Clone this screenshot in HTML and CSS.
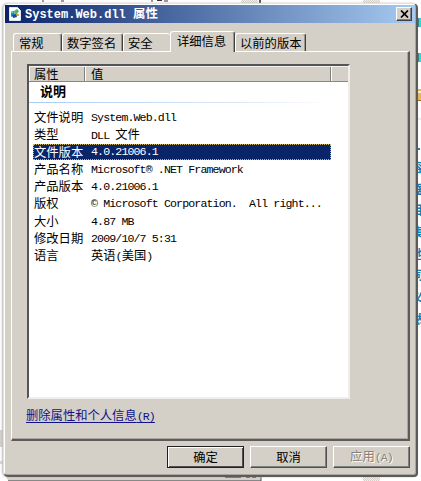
FILE: index.html
```html
<!DOCTYPE html>
<html lang="zh-CN">
<head>
<meta charset="utf-8">
<title>System.Web.dll 属性</title>
<link rel="stylesheet" href="styles.css">
</head>
<body>
<div class="desktop">
  <svg class="behind" width="421" height="481" viewBox="0 0 421 481" aria-hidden="true">
    <defs><pattern id="dots" width="2" height="2" patternUnits="userSpaceOnUse"><rect width="2" height="2" fill="#f2f1ee"/><path d="M0 0h1v1H0zM1 1h1v1H1z" fill="#d4d0c8"/></pattern></defs>
    <path d="M241 0h17v3h-17zM363 0h17v3h-17zM363 476h17v5h-17z" fill="url(#dots)"/>
    <path d="M260 0v3" stroke="#555" stroke-width="2"/>
    <path d="M42 1h2M61 1h3M151 1h2M157 .5h5M164 1h4" stroke="#333"/>
    <path d="M0 430h6v17H0z" fill="#d4d0c8"/>
    <path d="M0 461h5v3H0z" fill="#d8d5cf"/>
    <path d="M4 474h257v6H8z" fill="#d4d0c8"/>
    <path d="M8 480.500h253" stroke="#888"/>
    <path d="M261 476v5" stroke="#555"/>
    <path d="M225 477h16M246 477h4M252 477h4" stroke="#444" stroke-width="1.500"/>
    <path d="M417 18h4v9h-4zM417 53h4v9h-4z" fill="#13e4ea"/>
    <path d="M418 18h1v9h-1zM418 53h1v9h-1z" fill="#407b70"/>
    <path d="M417 89h4v12h-4z" fill="#e9b84f"/><path d="M417 91h4v2h-4z" fill="#fff0c0"/>
    <path d="M417 100.500h4" stroke="#9b7022"/>
    <path d="M417 119h4" stroke="#ddd"/>
    <path d="M418 149h2" stroke="#087fc0" stroke-width="2"/>
  </svg>
  <div class="sidetext" aria-hidden="true"><span>容</span><span>器</span><span>目</span><span>集</span><span>他</span><span>同</span><span>义</span><span>然</span></div>

  <main class="window">
    <header class="titlebar">
      <svg class="appicon" width="12" height="14" viewBox="0 0 12 14"><path d="M.5.500h8l3 3v10H.5z" fill="#fff" stroke="#dfe8ef"/><path d="M2 5l3-1 1 4-4 2z" fill="#1593c5"/><path d="M5 4l3-2 2 2-2 3-2 0z" fill="#45b66c"/><path d="M7 7h3v2H7z" fill="#dfa83a"/><path d="M3 8l4-1 1 3-4 1z" fill="#164b91"/><path d="M2 4h2v2H2z" fill="#5cc5e8"/></svg>
      <h1><span class="tl">System.Web.dll </span>属性</h1>
      <button class="close" aria-label="关闭"><svg width="9" height="8" viewBox="0 0 9 8"><path d="M1 .500l7 7M8 .500l-7 7" stroke="#000" stroke-width="1.700"/></svg></button>
    </header>

    <nav class="tabs">
      <div class="tab t1">常规</div><div class="tab t2">数字签名</div><div class="tab t3">安全</div><div class="tab active">详细信息</div><div class="tab t5">以前的版本</div>
    </nav>

    <section class="panel">
      <div class="list">
        <div class="head"><div class="h1">属性</div><div class="h2">值</div><div class="h3"></div></div>
        <div class="group">说明</div>
        <div class="rows">
          <div class="row"><span>文件说明</span><span class="l">System.Web.dll</span></div>
          <div class="row"><span>类型</span><span><span class="l">DLL </span>文件</span></div>
          <div class="row selected"><span>文件版本</span><span class="l">4.0.21006.1</span></div>
          <div class="row"><span>产品名称</span><span class="l">Microsoft® .NET Framework</span></div>
          <div class="row"><span>产品版本</span><span class="l">4.0.21006.1</span></div>
          <div class="row"><span>版权</span><span class="l">© Microsoft Corporation.  All right...</span></div>
          <div class="row"><span>大小</span><span class="l">4.87 MB</span></div>
          <div class="row"><span>修改日期</span><span class="l">2009/10/7 5:31</span></div>
          <div class="row"><span>语言</span><span>英语<span class="l">(</span>美国<span class="l">)</span></span></div>
        </div>
      </div>
      <a class="remove">删除属性和个人信息<span class="l">(R)</span></a>
    </section>

    <footer class="buttons">
      <button class="btn default">确定</button><button class="btn">取消</button><button class="btn disabled">应用<span class="l">(A)</span></button>
    </footer>
  </main>
</div>
</body>
</html>
```

FILE: styles.css
```css
* { box-sizing: border-box; }
body { margin: 0; background: #fff; color: #000; font: 12.3px/17.3px "Noto Sans CJK SC", sans-serif; }
button { font: inherit; padding: 0; margin: 0; }
.desktop { position: relative; width: 421px; height: 481px; overflow: hidden; padding: 3px 0 0 3px; }
.behind { position: absolute; left: 0; top: 0; }
.sidetext { position: absolute; left: 411px; top: 157px; display: flex; flex-direction: column; color: #087fc0; font-weight: 700; }
.sidetext span { height: 21.7px; line-height: 21.7px; }
.l { font-family: "Liberation Mono", monospace; font-size: 11.6px; letter-spacing: -0.88px; white-space: pre; }

.window {
  position: relative; width: 415px; height: 474px; padding: 1px 2px 2px;
  background: #d4d0c8; border-radius: 5px 5px 4px 5px;
  border: 1px solid #e5e2dc; border-right: 2px solid #5c5b59; border-bottom: 2px solid #5c5b59;
  box-shadow: inset 1px 1px #fff, inset -1px -1px #aaa69f, -1px 0 2px #bbb;
  display: flex; flex-direction: column;
}
.titlebar { margin-left: -1px; width: 410px; height: 18px; flex: none; display: flex; align-items: center; background: linear-gradient(90deg, #0a246a, #a6caf0); padding: 0 3px 0 4px; color: #fff; }
.appicon { flex: none; }
h1 { flex: 1; margin: 0 0 0 4px; font-size: 12.4px; line-height: 18px; font-weight: 700; white-space: pre; }
.tl { font-family: "Liberation Mono", monospace; font-size: 12px; letter-spacing: 0; }
.close { width: 16px; height: 14px; display: flex; align-items: center; justify-content: center; background: #d4d0c8; border: 1px solid; border-color: #fff #404040 #404040 #fff; box-shadow: inset -1px -1px #808080; }

.tabs { height: 28px; flex: none; display: flex; align-items: flex-end; margin: 0 0 0 5px; padding-left: 2px; }
.tab { height: 18px; line-height: 19px; padding-left: 5px; border: 1px solid #fff; border-right: 1px solid #404040; border-bottom: 0; border-radius: 3px 3px 0 0; box-shadow: inset -1px 0 #999690; white-space: nowrap; }
.t1 { width: 49px; }
.t2 { width: 61px; padding-left: 4px; }
.t3 { width: 47px; padding-left: 4px; border-right: 0; box-shadow: none; }
.active { width: 65px; height: 21px; padding-left: 6px; line-height: 18px; position: relative; margin-bottom: -1px; background: #d4d0c8; z-index: 1; }
.t5 { width: 71px; padding-left: 4px; }

.panel { width: 399px; height: 390px; flex: none; margin-left: 5px; padding: 12px 0 0 15px; border: 1px solid #fff; border-right: 2px solid #5c5b59; border-bottom: 2px solid #5c5b59; box-shadow: inset -1px -1px #aaa69f; }
.list { width: 323px; height: 335px; background: #fff; border: 2px solid; border-color: #555 #f0eeea #f0eeea #555; }
.head { height: 16px; display: flex; background: #d4d0c8; line-height: 15px; border-top: 1px solid #f4f2ef; border-bottom: 1px solid #8b8882; }
.h1 { width: 56px; padding-left: 5px; border-right: 1px solid #808080; box-shadow: inset 1px 0 #fff; }
.h2 { width: 246px; padding-left: 6px; border-right: 1px solid #808080; box-shadow: inset 1px 0 #fff; }
.h3 { flex: 1; box-shadow: inset 1px 0 #fff; }
.group { height: 21px; padding-left: 11px; font-weight: 700; font-size: 13px; line-height: 17px; background: linear-gradient(90deg, #aacdf3, #d9e8f8 65%, #fff 95%) 0 100% / 100% 1px no-repeat; }
.rows { padding: 6px 17px 0 4px; }
.row { height: 17.3px; display: flex; padding-left: 1px; white-space: nowrap; }
.row > span:first-child { width: 57px; flex: none; }
.selected { height: 16px; line-height: 16px; margin: .3px 0 1px; background: #0a246a; color: #fff; outline: 1px dotted #c9b66b; outline-offset: -1px; }
.remove { display: inline-block; margin: 8px 0 0 -1px; color: #11118b; text-decoration: underline; text-underline-offset: 2px; white-space: nowrap; }

.buttons { display: flex; gap: 6px; padding: 5px 0 0 161px; }
.btn { width: 77px; height: 22px; background: #d4d0c8; color: #000; line-height: 18px; border: 1px solid; border-color: #fff #505050 #505050 #fff; box-shadow: inset -1px -1px #808080; white-space: nowrap; }
.default { border: 1px solid #202020; box-shadow: inset 1px 1px #fff, inset -1px -1px #505050; }
.disabled { color: #85827c; text-shadow: 1px 1px #fff; }
```
